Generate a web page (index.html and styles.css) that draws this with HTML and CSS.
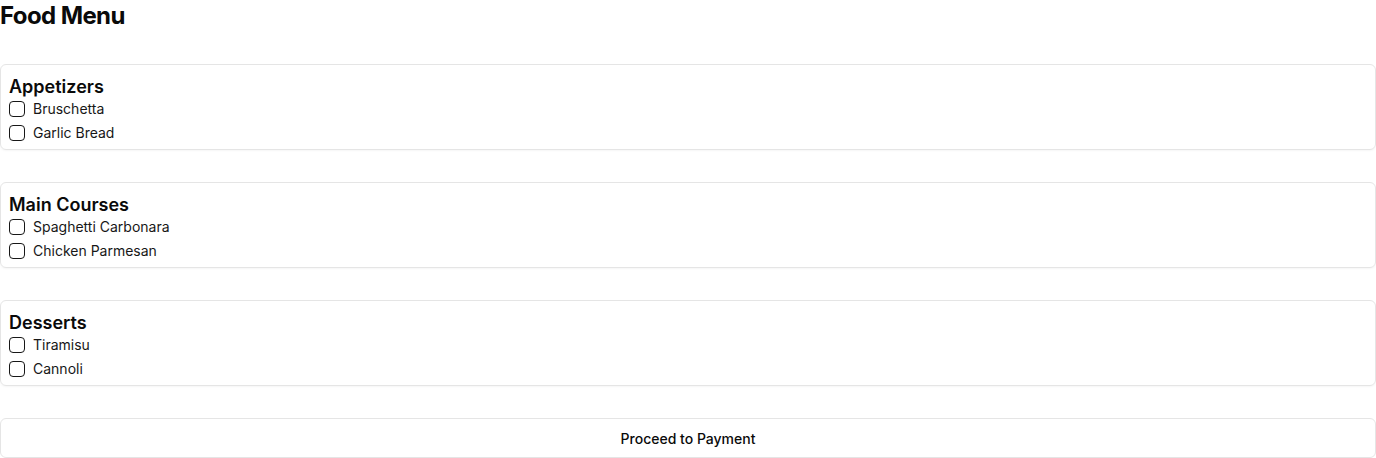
FILE: index.html
```html
<!DOCTYPE html>
<html lang="en">
<head>
<meta charset="utf-8">
<title>Food Menu</title>
<link rel="stylesheet" href="styles.css">
</head>
<body>
<div class="page">
  <h1 class="title">Food Menu</h1>
  <section class="card">
    <h2 class="card-title">Appetizers</h2>
    <label class="item"><input type="checkbox" class="check"><span>Bruschetta</span></label>
    <label class="item"><input type="checkbox" class="check"><span>Garlic Bread</span></label>
  </section>
  <section class="card">
    <h2 class="card-title">Main Courses</h2>
    <label class="item"><input type="checkbox" class="check"><span>Spaghetti Carbonara</span></label>
    <label class="item"><input type="checkbox" class="check"><span>Chicken Parmesan</span></label>
  </section>
  <section class="card">
    <h2 class="card-title">Desserts</h2>
    <label class="item"><input type="checkbox" class="check"><span>Tiramisu</span></label>
    <label class="item"><input type="checkbox" class="check"><span>Cannoli</span></label>
  </section>
  <button class="pay" type="button">Proceed to Payment</button>
</div>
</body>
</html>
```
FILE: styles.css
```css
* { box-sizing: border-box; }
html, body { margin: 0; padding: 0; background: #fff; }
body { font-family: Inter, "Noto Sans", sans-serif; color: #0a0a0a; }
.page { display: flex; flex-direction: column; gap: 32px; }
.title { margin: 0; font-size: 24px; line-height: 32px; font-weight: 700; letter-spacing: -0.6px; }
.card {
  border: 1px solid #e5e5e5;
  border-radius: 6px;
  padding: 8px 8px 4px;
  display: flex;
  flex-direction: column;
  box-shadow: 0 1px 2px rgba(0,0,0,0.04);
}
.card-title { margin: 0; font-size: 18px; line-height: 28px; font-weight: 600; }
.item { display: flex; align-items: center; gap: 8px; height: 24px; font-size: 14px; line-height: 20px; color: #171717; }
.card-title + .item { margin-top: -4px; }
.check {
  appearance: none;
  -webkit-appearance: none;
  margin: 0;
  width: 16px;
  height: 16px;
  border: 1px solid #171717;
  border-radius: 4px;
  background: #fff;
}
.pay {
  height: 40px;
  border: 1px solid #e5e5e5;
  border-radius: 6px;
  background: #fff;
  font-family: inherit;
  font-size: 14px;
  font-weight: 500;
  color: #0a0a0a;
  padding: 0;
}
```
